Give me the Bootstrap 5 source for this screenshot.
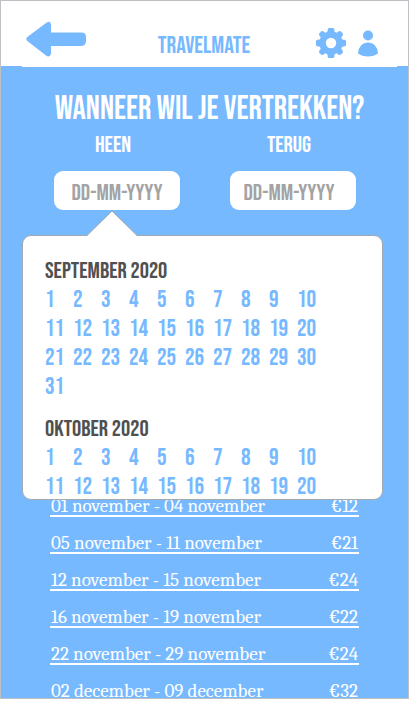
<!DOCTYPE html>
<html lang="nl">
<head>
<meta charset="utf-8">
<meta name="viewport" content="width=device-width, initial-scale=1">
<title>TravelMate</title>
<link rel="stylesheet" href="https://cdn.jsdelivr.net/npm/bootstrap@5.3.0/dist/css/bootstrap.min.css">
<style>
:root { --sky: #77b9ff; --edge: #a3a9b0; }
body { background: #fff; font-family: "Bebas Neue", "Liberation Sans Narrow", "Liberation Sans", sans-serif; font-weight: 400; font-size: 23px; line-height: 29px; }
.screen { height: calc(100vh - 2px); background: var(--sky); border: 1px solid #bdc1c6; }
.topbar { height: 65px; padding: 0 30px 0 25px; background: #fff; color: var(--sky); }
.topbar::after { content: ""; position: absolute; left: 21px; right: 11px; bottom: -1px; height: 1px; background: #fff; }
.topbar svg { display: block; fill: var(--sky); }
.side { flex: 1 1 0; }
.tools { padding-top: 27px; }
.brand-name { font-size: 24px; padding: 30px 0 0 4px; }
.question { font-size: 33px; line-height: 36px; padding: 25px 0 0 10px; }
.dates { padding: 4px 52px 0 53px; }
.date-col { width: 126px; }
.date-col label { margin-bottom: 11px; }
.date-col input { height: 39px; border-radius: 9px; font-size: 23px; padding: 4px 0 0; text-align: center; }
.date-col input::placeholder { color: #a3a3a3; opacity: 1; }
.picker { left: 21px; right: 25px; top: 234px; height: 265px; padding: 21px 22px 0; background: #fff; border: 1px solid var(--edge); border-radius: 9px; z-index: 2; }
.picker-tip { left: 86px; top: 209px; z-index: 3; }
.picker h2 { font-size: 23px; line-height: 28px; font-weight: 400; color: #505050; }
.days { display: grid; grid-template-columns: repeat(10, 28px); margin-bottom: 14px; }
.days button { font-size: 24px; line-height: 29px; color: var(--sky); }
.trips { margin: 270px 49px 0; font-family: Caladea, Cambria, "Liberation Serif", serif; font-size: 19px; }
.trips li { height: 37px; border-bottom: 2px solid #fff; line-height: 24px; padding: 14px 1px 0; }
</style>
<script src="https://cdn.jsdelivr.net/npm/bootstrap@5.3.0/dist/js/bootstrap.bundle.min.js"></script>
</head>
<body>
<div class="screen position-relative overflow-hidden text-white">
  <header class="topbar d-flex position-relative">
    <div class="side pt-3">
      <button class="btn p-0 border-0 mt-1" type="button" aria-label="Terug"><svg width="60" height="36" viewBox="0 0 61 36"><path d="M2 15.500 20 2Q24-1.500 25.500 3V11.500H56Q61 11.500 61 16V20Q61 25 56 25H25.500V33Q24 37.500 20 34.500L2 20.500Q-1.500 18 2 15.500Z"/></svg></button>
    </div>
    <div class="brand-name">TRAVELMATE</div>
    <div class="side tools d-flex justify-content-end align-items-start gap-2">
      <button class="btn p-0 border-0" type="button" aria-label="Instellingen"><svg class="me-1" width="30" height="30" viewBox="0 0 30 30"><path fill-rule="evenodd" d="M13 0H17Q18.200 0 18.300 1.500L18.600 3.800 20.800 4.700 22.800 3.200Q24 2.500 25 3.500L26.600 5.200Q27.500 6.200 26.700 7.400L25.300 9.300 26.200 11.500 28.700 11.800Q30 12 30 13.200V17Q30 18.200 28.700 18.300L26.200 18.700 25.300 20.800 26.700 22.700Q27.500 24 26.600 24.900L24.900 26.600Q24 27.500 22.700 26.700L20.800 25.300 18.600 26.200 18.300 28.700Q18.200 30 17 30H13Q11.800 30 11.700 28.700L11.400 26.200 9.200 25.300 7.300 26.700Q6 27.500 5.100 26.600L3.400 24.900Q2.500 24 3.300 22.700L4.700 20.800 3.800 18.700 1.300 18.300Q0 18.200 0 17V13.200Q0 12 1.300 11.800L3.800 11.500 4.700 9.300 3.300 7.400Q2.500 6.200 3.400 5.200L5 3.500Q6 2.500 7.200 3.200L9.200 4.700 11.400 3.800 11.700 1.500Q11.800 0 13 0ZM15 9.800A5.200 5.200 0 1 0 15 20.200 5.200 5.200 0 1 0 15 9.800Z"/></svg></button>
      <button class="btn p-0 border-0" type="button" aria-label="Profiel"><svg class="mt-1" width="20" height="26" viewBox="0 0 20 26" overflow="visible"><circle cx="10" cy="3.500" r="5"/><path d="M0 21.500Q1 10.500 10 10.500T20 21.500Q16 24.500 10 24.500T0 21.500Z"/></svg></button>
    </div>
  </header>
  <main>
    <h1 class="question text-center fw-normal m-0">WANNEER WIL JE VERTREKKEN?</h1>
    <form class="dates d-flex justify-content-between">
      <div class="date-col d-flex flex-column">
        <label class="text-center pe-2" for="heen">HEEN</label>
        <input class="form-control border-0" id="heen" type="text" placeholder="DD-MM-YYYY">
      </div>
      <div class="date-col d-flex flex-column">
        <label class="text-center pe-2" for="terug">TERUG</label>
        <input class="form-control border-0 pe-2" id="terug" type="text" placeholder="DD-MM-YYYY">
      </div>
    </form>
    <ul class="trips list-unstyled">
      <li class="d-flex justify-content-between"><span>01 november - 04 november</span><span>€12</span></li>
      <li class="d-flex justify-content-between"><span>05 november - 11 november</span><span>€21</span></li>
      <li class="d-flex justify-content-between"><span>12 november - 15 november</span><span>€24</span></li>
      <li class="d-flex justify-content-between"><span>16 november - 19 november</span><span>€22</span></li>
      <li class="d-flex justify-content-between"><span>22 november - 29 november</span><span>€24</span></li>
      <li class="d-flex justify-content-between"><span>02 december - 09 december</span><span>€32</span></li>
    </ul>
  </main>
  <section class="picker position-absolute overflow-hidden" aria-label="Kies een datum">
    <h2 class="m-0">SEPTEMBER 2020</h2>
    <div class="days" data-count="31"></div>
    <h2 class="m-0">OKTOBER 2020</h2>
    <div class="days" data-count="20"></div>
  </section>
  <svg class="picker-tip position-absolute" width="50" height="27" viewBox="0 0 50 27" aria-hidden="true"><path d="M0 27V25.500L25 1 50 25.500V27Z" fill="#fff"/><path d="M0 25.500 25 1 50 25.500" fill="none" stroke="#a3a9b0"/></svg>
</div>
<script>
document.querySelectorAll('.days').forEach(function (grid) {
  for (var day = 1; day <= Number(grid.dataset.count); day++) {
    var button = document.createElement('button');
    button.type = 'button';
    button.className = 'btn p-0 border-0 text-start';
    button.textContent = day;
    grid.appendChild(button);
  }
});
</script>
</body>
</html>
